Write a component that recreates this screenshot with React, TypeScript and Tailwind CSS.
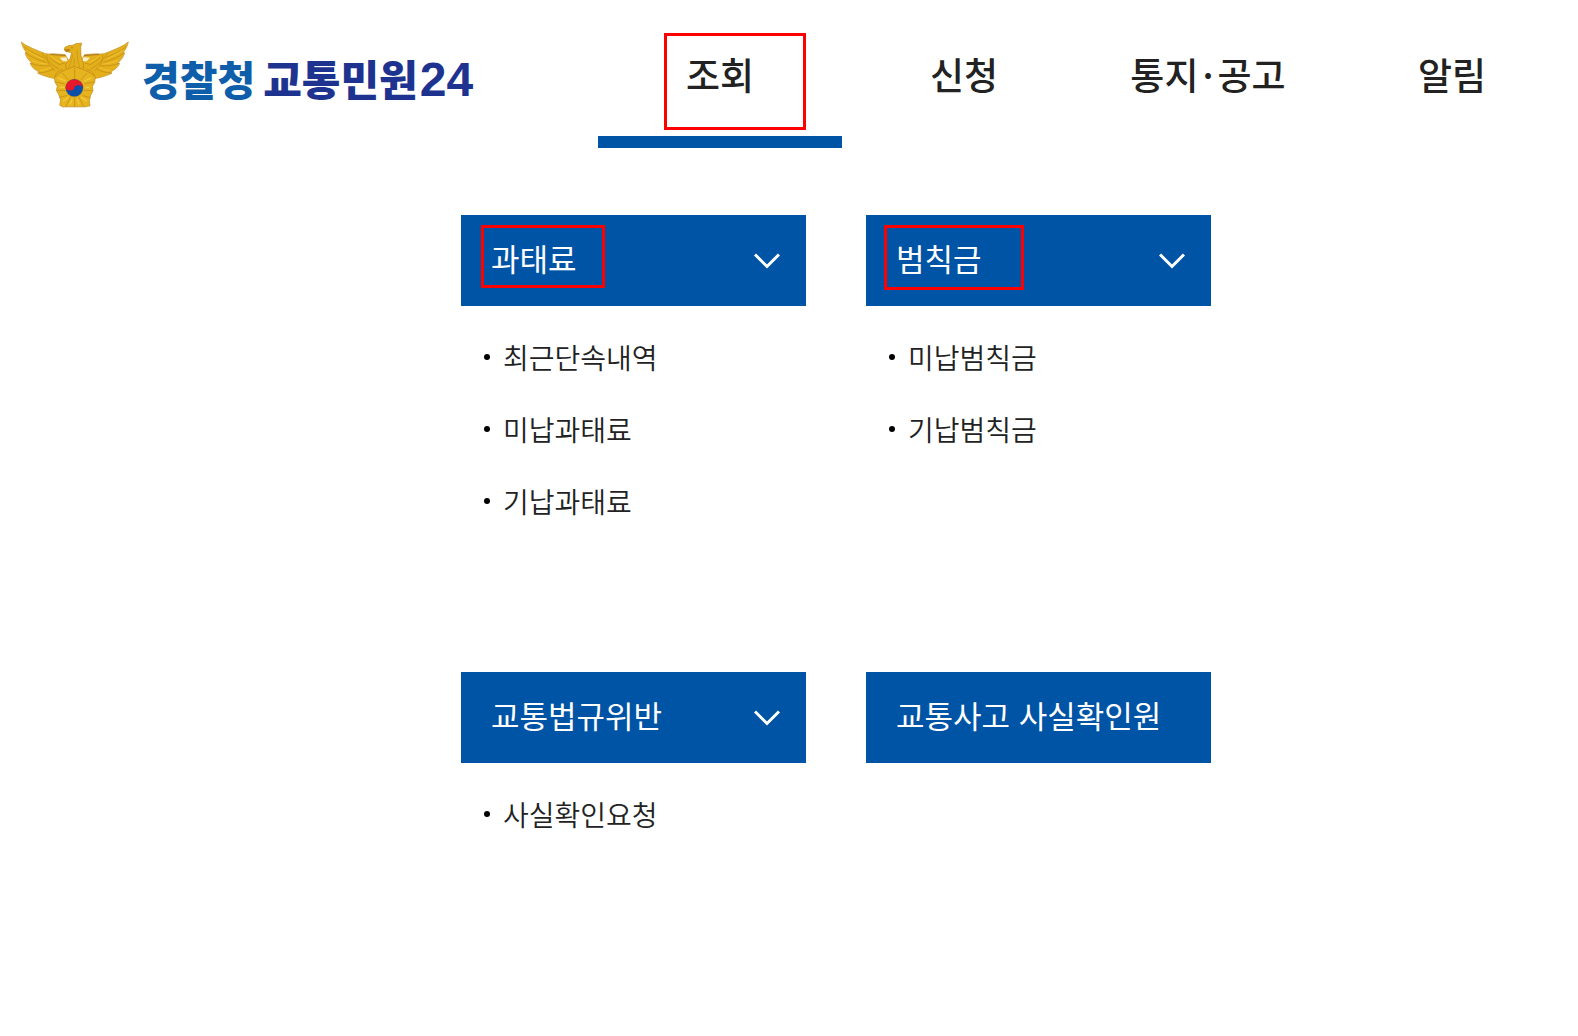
import { useState } from "react"

const navItems = ["조회", "신청", "통지·공고", "알림"]

const menuGroups = [
  { title: "과태료", items: ["최근단속내역", "미납과태료", "기납과태료"], mark: "w-[124px] h-[63px] left-[20px]" },
  { title: "범칙금", items: ["미납범칙금", "기납범칙금"], mark: "w-[140px] h-[65px] left-[18px]" },
  { title: "교통법규위반", items: ["사실확인요청"], mark: "" },
  { title: "교통사고 사실확인원", items: [], mark: "" },
]

function Wing() {
  return (
    <g>
      <path
        d="M35 36 C50 50 75 58 98 68 C112 74 122 72 134 72 L166 74 L182 100 L176 130 L152 143 L134 146 C118 143 100 138 84 130 L90 127 C76 121 66 112 61 101 L68 101 C56 91 49 80 46 69 L52 70 C43 60 37 48 35 36 Z"
        fill="#e3b01b"
        stroke="#c9972f"
        strokeWidth="2"
      />
      <g fill="none" stroke="#bd8418" strokeWidth="3" opacity="0.6">
        <path d="M42 50 C58 66 82 74 104 84" />
        <path d="M48 69 C66 84 88 90 110 98" />
        <path d="M62 100 C80 108 98 108 118 108" />
        <path d="M84 129 C102 130 118 124 130 118" />
        <path d="M96 68 C108 84 120 102 148 118" />
        <path d="M112 74 C110 92 118 108 136 122" />
        <path d="M120 84 L148 104 L166 100" />
        <path d="M136 144 C136 132 144 124 160 118" />
      </g>
      <g fill="none" stroke="#f0c52f" strokeWidth="3">
        <path d="M50 60 C66 72 84 80 100 88" />
        <path d="M66 92 C82 98 98 102 112 103" />
        <path d="M90 122 C104 121 116 117 124 112" />
        <path d="M124 78 C132 88 140 94 154 98" />
      </g>
      <path d="M150 84 L170 82 L174 94 L160 94 Z" fill="#f8efcf" />
      <path d="M122 74 L168 77" stroke="#a9782a" strokeWidth="3" />
    </g>
  )
}

function Emblem() {
  return (
    <svg viewBox="34 34 324 200" className="w-[108px] h-[67px] shrink-0" aria-hidden="true">
      <Wing />
      <g transform="translate(391 0) scale(-1 1)">
        <Wing />
      </g>
      <path
        d="M163 59 L166 52 L178 47 L190 46 L200 41 L216 40 L213 52 L214 78 L222 104 L218 132 L172 132 L168 104 L181 86 L186 69 L170 65 Z"
        fill="#e3b01b"
        stroke="#bd8418"
        strokeWidth="2"
      />
      <path d="M163 59 L176 57 L184 61 L170 67 Z" fill="#b98217" />
      <circle cx="187" cy="54" r="2" fill="#8a5c10" />
      <g fill="none" stroke="#bd8418" strokeWidth="2" opacity="0.7">
        <path d="M190 72 L184 96 L176 116" />
        <path d="M202 60 L204 90 L212 118" />
        <path d="M194 84 L192 124" />
      </g>
      <path
        d="M172 118 L195 110 L218 118 L238 127 L257 140 L255 158 L248 170 L250 183 L243 196 L239 212 L241 228 L228 231 L158 231 L150 226 L153 210 L147 194 L140 182 L143 169 L136 157 L134 143 L152 128 Z"
        fill="#e6b41f"
        stroke="#c08619"
        strokeWidth="2"
      />
      <g fill="none" stroke="#bd8418" strokeWidth="3" opacity="0.6">
        <path d="M137 156 L165 162" />
        <path d="M143 182 L167 182" />
        <path d="M148 203 L172 197" />
        <path d="M168 230 L182 203" />
        <path d="M195 231 L195 204" />
        <path d="M222 230 L208 203" />
        <path d="M242 203 L218 197" />
        <path d="M248 182 L223 182" />
        <path d="M254 156 L225 162" />
        <path d="M232 130 L214 150" />
        <path d="M158 130 L176 150" />
        <path d="M195 114 L195 145" />
      </g>
      <g fill="none" stroke="#f3cb38" strokeWidth="4">
        <path d="M145 144 L168 154" />
        <path d="M150 172 L164 173" />
        <path d="M160 214 L176 202" />
        <path d="M181 224 L188 208" />
        <path d="M209 224 L202 208" />
        <path d="M231 214 L214 202" />
        <path d="M240 172 L227 173" />
        <path d="M246 144 L223 154" />
      </g>
      <circle cx="194" cy="174" r="28" fill="#cf9a18" />
      <circle cx="194" cy="174" r="26" fill="#0b4fa8" />
      <path d="M168 174 A26 26 0 0 1 220 174 A13 8 0 0 0 194 174 A13 8 0 0 1 168 174 Z" fill="#e6182c" />
    </svg>
  )
}

function Chevron() {
  return (
    <svg viewBox="0 0 26 16" className="w-[26px] h-[16px]" fill="none" stroke="currentColor" strokeWidth="3" aria-hidden="true">
      <path d="M1 1.5 L13 13.5 L25 1.5" />
    </svg>
  )
}

export default function App() {
  const [active, setActive] = useState("조회")

  return (
    <div lang="ko" className="min-h-screen bg-white text-[#222] font-['Noto_Sans_CJK_KR','Noto_Sans',sans-serif]">
      <header className="flex h-[148px]">
        <a href="#" className="w-[598px] shrink-0 pl-[21px] pt-[41px] flex items-start gap-[13px]">
          <Emblem />
          <span className="flex items-baseline gap-2 text-[41px] leading-[74px] font-black whitespace-nowrap">
            <span className="text-[#0f5eaa]">경찰청</span>
            <span className="flex items-baseline gap-[2px] text-[42px] text-[#1d338f]">
              교통민원
              <span className="text-[48px] font-bold font-['Liberation_Sans',sans-serif]">24</span>
            </span>
          </span>
        </a>
        <nav className="flex-1 grid grid-cols-4 pr-1">
          {navItems.map((item) => (
            <button
              key={item}
              onClick={() => setActive(item)}
              className={`relative pt-3 text-[37px] leading-[54px] font-medium whitespace-nowrap border-b-12 ${active === item ? "border-[#0054a6]" : "border-transparent"}`}
            >
              {item.split("·").map((part, i) => (
                <span key={part}>
                  {i > 0 && <span className="mx-1">·</span>}
                  {part}
                </span>
              ))}
              {item === "조회" && <span className="absolute left-[66px] top-[33px] w-[142px] h-[97px] border-3 border-[#ff0000]" />}
            </button>
          ))}
        </nav>
      </header>

      <main className="ml-[461px] mt-[67px] grid grid-cols-[345px_345px] grid-rows-[457px_auto] gap-x-[60px]">
        {menuGroups.map((group) => (
          <section key={group.title}>
            <button className="relative w-full h-[91px] pl-[30px] pr-[26px] flex items-center justify-between bg-[#0054a6] text-white text-[31px] leading-[46px] whitespace-nowrap">
              <span className="pb-[5px]">{group.title}</span>
              {group.items.length > 0 && <Chevron />}
              {group.mark && <span className={`absolute top-[10px] border-3 border-[#ff0000] ${group.mark}`} />}
            </button>
            <ul className="pt-[15px]">
              {group.items.map((item) => (
                <li key={item} className="h-[72px] pl-[23px] flex items-center gap-[13px]">
                  <span className="size-[6px] rounded-full bg-black" />
                  <a href="#" className="text-[28px] leading-[42px] font-['Noto_Sans_CJK_KR_DemiLight','Noto_Sans_CJK_KR',sans-serif]">{item}</a>
                </li>
              ))}
            </ul>
          </section>
        ))}
      </main>
    </div>
  )
}
